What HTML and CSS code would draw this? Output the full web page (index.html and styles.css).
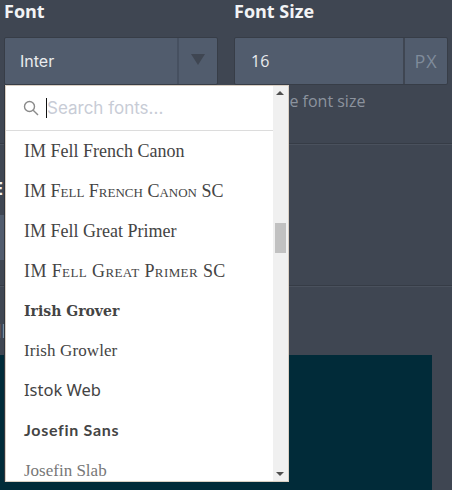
FILE: index.html
```html
<!DOCTYPE html>
<html lang="en">
<head>
  <meta charset="UTF-8" />
  <title>Font settings</title>
  <link rel="stylesheet" href="styles.css">
</head>
<body>
  <div class="panel">
    <div class="fields">
      <div class="field field-font">
        <div class="label">Font</div>
        <div class="select-box">
          <span class="select-value">Inter</span>
          <span class="select-arrow"><span class="triangle"></span></span>
        </div>
      </div>
      <div class="field field-size">
        <div class="label">Font Size</div>
        <div class="size-box">
          <span class="size-value">16</span>
          <span class="size-unit">PX</span>
        </div>
        <div class="hint">Choose the font size</div>
      </div>
    </div>

    <div class="section section-one">
      <div class="cut-label">E</div>
      <div class="cut-bar"></div>
    </div>
    <div class="section section-two">
      <div class="cut-label">ll</div>
      <div class="preview"></div>
    </div>

    <div class="dropdown">
      <div class="search">
        <svg class="search-icon" width="16" height="16" viewBox="0 0 16 16" fill="none" stroke="#8a8a8a" stroke-width="1.4">
          <circle cx="6.5" cy="6.5" r="5"/>
          <path d="M10.2 10.2 L15 15"/>
        </svg>
        <span class="caret"></span>
        <span class="placeholder">Search fonts...</span>
      </div>
      <div class="list-wrap">
        <ul class="font-list">
          <li class="f-fell">IM Fell French Canon</li>
          <li class="f-fell f-caps">IM Fell French Canon SC</li>
          <li class="f-fell">IM Fell Great Primer</li>
          <li class="f-fell f-caps f-wide">IM Fell Great Primer SC</li>
          <li class="f-grover">Irish Grover</li>
          <li class="f-growler">Irish Growler</li>
          <li class="f-istok">Istok Web</li>
          <li class="f-josefin">Josefin Sans</li>
          <li class="f-slab">Josefin Slab</li>
        </ul>
        <div class="scrollbar">
          <span class="scroll-up"></span>
          <span class="scroll-thumb"></span>
          <span class="scroll-down"></span>
        </div>
      </div>
    </div>
  </div>
</body>
</html>
```

FILE: styles.css
```css
html, body {
  margin: 0;
  padding: 0;
}

body {
  width: 452px;
  height: 490px;
  overflow: hidden;
  background: #3f4652;
  font-family: "Open Sans", sans-serif;
}

.panel {
  position: relative;
  height: 490px;
  overflow: hidden;
}

.fields {
  display: flex;
  height: 143px;
  padding-left: 4px;
  gap: 16px;
}

.field-font,
.field-size {
  width: 214px;
}

.label {
  height: 37px;
  font-size: 18px;
  font-weight: 700;
  line-height: 23px;
  color: #f2f3f5;
}

.select-box,
.size-box {
  display: flex;
  box-sizing: border-box;
  height: 48px;
  background: #515c6d;
  border: 1px solid #373d47;
  border-radius: 2px;
}

.select-value {
  flex: 1;
  padding-left: 15px;
  font-family: Inter, sans-serif;
  font-size: 16px;
  line-height: 47px;
  color: #e9ebee;
}

.select-arrow {
  display: flex;
  align-items: center;
  justify-content: center;
  width: 38px;
  border-left: 2px solid #465060;
}

.triangle {
  width: 0;
  height: 0;
  margin-bottom: 4px;
  border-left: 7px solid transparent;
  border-right: 7px solid transparent;
  border-top: 11px solid #3f4652;
}

.size-value {
  flex: 1;
  padding-left: 16px;
  font-size: 16px;
  line-height: 46px;
  color: #e9ebee;
}

.size-unit {
  width: 42px;
  text-align: center;
  border-left: 2px solid #3f4652;
  font-size: 18px;
  line-height: 46px;
  color: #7f8b9b;
  letter-spacing: 1px;
}

.hint {
  margin-top: 5px;
  margin-left: -20px;
  font-size: 16px;
  line-height: 22px;
  color: #8c939e;
  white-space: nowrap;
}

.section {
  border-top: 1px solid #363c46;
  box-shadow: inset 0 1px 0 #4a515d;
  position: relative;
}

.section-one {
  height: 141px;
}

.section-two {
  height: 204px;
}

.cut-label {
  position: absolute;
  left: -7px;
  font-size: 18px;
  font-weight: 700;
  line-height: 24px;
  color: #f2f3f5;
}

.section-one .cut-label {
  top: 32px;
}

.section-two .cut-label {
  top: 33px;
  left: -3px;
  font-weight: 400;
  color: #8d939c;
}

.cut-bar {
  position: absolute;
  left: 0;
  top: 71px;
  width: 20px;
  height: 45px;
  background: #515c6d;
}

.preview {
  position: absolute;
  left: 0;
  right: 20px;
  top: 69px;
  bottom: 0;
  background: #012b39;
}

.dropdown {
  position: absolute;
  left: 5px;
  top: 85px;
  box-sizing: border-box;
  width: 284px;
  height: 397px;
  background: #fff;
  border: 1px solid #d9cfc3;
  box-shadow: -1px 0 0 #2f343d;
  overflow: hidden;
}

.search {
  display: flex;
  align-items: center;
  box-sizing: border-box;
  height: 45px;
  width: 100%;
  padding-left: 17px;
  border-bottom: 1px solid #dcdcdc;
  background: #fff;
}

.search-icon {
  flex: none;
  margin-right: 7px;
}

.caret {
  width: 1px;
  height: 20px;
  background: #111;
}

.placeholder {
  font-family: Inter, sans-serif;
  font-size: 17px;
  color: #c8ccd6;
}

.list-wrap {
  display: flex;
  height: 350px;
}

.font-list {
  flex: 1;
  margin: 0;
  padding: 0;
  list-style: none;
  overflow: hidden;
}

.font-list li {
  height: 40px;
  padding-left: 18px;
  font-size: 16px;
  line-height: 40px;
  color: #444;
  white-space: nowrap;
}

.font-list .f-fell {
  font-family: "Liberation Serif", serif;
  font-size: 18px;
  line-height: 41px;
}

.f-caps {
  font-variant: small-caps;
}

.font-list .f-wide {
  letter-spacing: 0.4px;
}

.font-list .f-grover {
  font-family: "DejaVu Serif", serif;
  font-weight: 700;
  font-size: 14px;
  line-height: 41px;
}

.font-list .f-growler {
  font-family: "Liberation Serif", serif;
  font-size: 17px;
  letter-spacing: 0.1px;
}

.font-list .f-istok {
  font-family: "Noto Sans", sans-serif;
  font-size: 16.5px;
  line-height: 38px;
}

.font-list .f-josefin {
  font-family: Lato, sans-serif;
  font-weight: 700;
  letter-spacing: 0.7px;
  line-height: 38px;
}

.font-list .f-slab {
  font-family: "Liberation Serif", serif;
  font-size: 17px;
  color: #777;
}

.scrollbar {
  position: relative;
  width: 15px;
  margin-top: -45px;
  background: #f0f0f0;
}

.scroll-thumb {
  position: absolute;
  left: 2px;
  top: 137px;
  width: 11px;
  height: 30px;
  background: #c1c1c1;
}

.scroll-up,
.scroll-down {
  position: absolute;
  left: 3px;
  width: 0;
  height: 0;
  border-left: 4px solid transparent;
  border-right: 4px solid transparent;
}

.scroll-up {
  top: 5px;
  border-bottom: 4px solid #505050;
}

.scroll-down {
  bottom: 5px;
  border-top: 4px solid #505050;
}
```
